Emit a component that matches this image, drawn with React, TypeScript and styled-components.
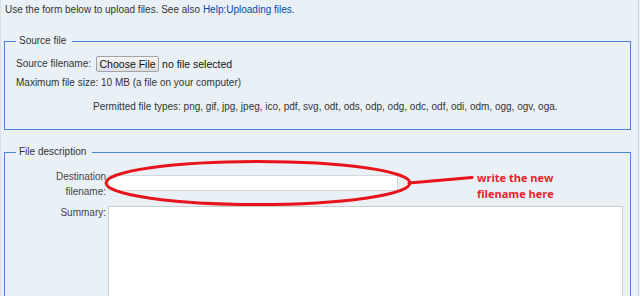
import styled, { createGlobalStyle } from "styled-components";

const GlobalStyle = createGlobalStyle`
  html, body {
    margin: 0;
    padding: 0;
    background: #f2f5f8;
  }
  body {
    font-family: "Liberation Sans", Arial, sans-serif;
  }
`;

const Frame = styled.div`
  position: relative;
  width: 640px;
  height: 296px;
  overflow: hidden;
`;

const Page = styled.div`
  width: 639px;
  height: 296px;
  box-sizing: border-box;
  background: #eaf1f6;
  border-left: 1px solid #d9e0e6;
  border-right: 1px solid #c6cdd3;
  color: #333;
  font-size: 10px;
  line-height: 14px;
`;

const Intro = styled.p`
  margin: 0;
  padding: 3px 0 0 4px;
  height: 14px;
`;

const Link = styled.a`
  color: #0645ad;
  text-decoration: none;
`;

const Fieldset = styled.fieldset<{ $top: number; $bottom: number }>`
  margin: ${(p) => p.$top}px 7px 0 3px;
  padding: 0 11px ${(p) => p.$bottom}px 11px;
  border: 1px solid #4b83d9;
  min-width: 0;
`;

const Legend = styled.legend`
  padding: 0 6px 0 3px;
  margin-left: 0;
  font-size: 10px;
  line-height: 14px;
  color: #333;
`;

const FileRow = styled.div`
  display: flex;
  align-items: center;
  height: 18px;
  margin-top: 7px;
  gap: 3px;
`;

const ChooseButton = styled.button`
  height: 16px;
  width: 63px;
  padding: 0;
  margin-left: 2px;
  box-sizing: border-box;
  border: 1px solid #a4a4a4;
  border-radius: 2px;
  background: linear-gradient(#f4f4f4, #dedede);
  font-family: "Liberation Sans", Arial, sans-serif;
  font-size: 10.5px;
  line-height: 14px;
  color: #111;
`;

const NoFile = styled.span`
  font-size: 10.5px;
  color: #111;
`;

const InfoLine = styled.div<{ $top: number; $indent?: number }>`
  margin-top: ${(p) => p.$top}px;
  margin-left: ${(p) => p.$indent ?? 0}px;
  height: 14px;
  white-space: nowrap;
`;

const FormGrid = styled.div`
  display: grid;
  grid-template-columns: 92px 1fr;
  row-gap: 6px;
  margin-top: 8px;
`;

const Label = styled.label`
  text-align: right;
  padding: 2px 2px 0 0;
  line-height: 15px;
  color: #444;
  align-self: center;
`;

const TopLabel = styled(Label)`
  align-self: start;
  padding-top: 0;
`;

const TextInput = styled.input`
  width: 290px;
  height: 16px;
  box-sizing: border-box;
  border: 1px solid #d3d8dd;
  background: #fff;
  align-self: center;
  margin: 0;
`;

const TextArea = styled.textarea`
  width: 515px;
  height: 120px;
  box-sizing: border-box;
  border: 1px solid #c8cdd2;
  background: #fff;
  margin: 1px 0 0 0;
  resize: none;
`;

const Overlay = styled.svg`
  position: absolute;
  left: 0;
  top: 0;
  pointer-events: none;
`;

const Note = styled.div`
  position: absolute;
  left: 477px;
  top: 170px;
  font-family: "Open Sans", "Liberation Sans", sans-serif;
  font-weight: 700;
  font-size: 11px;
  line-height: 16px;
  color: #e8202a;
`;

export default function App() {
  return (
    <Frame>
      <GlobalStyle />
      <Page>
        <Intro>
          Use the form below to upload files. See also{" "}
          <Link href="#">Help:Uploading files</Link>.
        </Intro>

        <Fieldset $top={17} $bottom={15}>
          <Legend>Source file</Legend>
          <FileRow>
            <span>Source filename:</span>
            <ChooseButton type="button">Choose File</ChooseButton>
            <NoFile>no file selected</NoFile>
          </FileRow>
          <InfoLine $top={3}>Maximum file size: 10 MB (a file on your computer)</InfoLine>
          <InfoLine $top={10} $indent={77}>
            Permitted file types: png, gif, jpg, jpeg, ico, pdf, svg, odt, ods, odp, odg, odc,
            odf, odi, odm, ogg, ogv, oga.
          </InfoLine>
        </Fieldset>

        <Fieldset $top={15} $bottom={20}>
          <Legend>File description</Legend>
          <FormGrid>
            <Label>
              Destination
              <br />
              filename:
            </Label>
            <TextInput type="text" />
            <TopLabel>Summary:</TopLabel>
            <TextArea />
          </FormGrid>
        </Fieldset>
      </Page>

      <Overlay width="640" height="296" viewBox="0 0 640 296">
        <ellipse
          cx="258"
          cy="183"
          rx="152"
          ry="21.5"
          fill="none"
          stroke="#e8141c"
          strokeWidth="3"
        />
        <path d="M409 183 L472 177.5" stroke="#e8141c" strokeWidth="3" strokeLinecap="round" />
      </Overlay>
      <Note>
        write the new
        <br />
        filename here
      </Note>
    </Frame>
  );
}
